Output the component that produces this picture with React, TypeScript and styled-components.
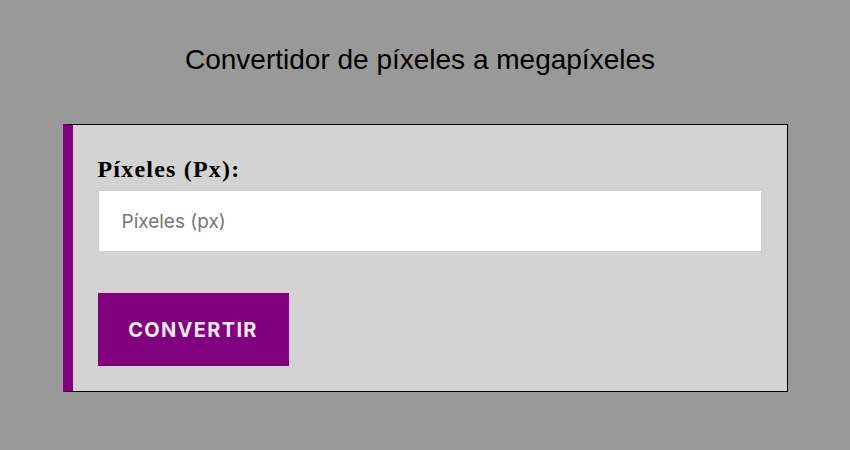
import styled, { createGlobalStyle } from 'styled-components'

const GlobalStyle = createGlobalStyle`
  html, body {
    margin: 0;
    padding: 0;
    background: #999999;
  }
  body {
    font-family: "Liberation Sans", Arial, sans-serif;
  }
`

const Page = styled.div`
  display: flex;
  flex-direction: column;
  align-items: center;
  padding-top: 44px;
`

const Title = styled.h1`
  margin: 0 0 48px 0;
  padding-right: 10px;
  font-family: "Liberation Sans", Arial, sans-serif;
  font-size: 28px;
  font-weight: 400;
  line-height: 32px;
  color: #000;
`

const Card = styled.form`
  box-sizing: border-box;
  width: 725px;
  display: flex;
  flex-direction: column;
  align-items: flex-start;
  padding: 25px;
  background: #d3d3d3;
  border: 1px solid #000;
  border-left: 10px solid #800080;
`

const Label = styled.label`
  font-family: "Liberation Serif", "Times New Roman", serif;
  font-size: 24px;
  font-weight: 700;
  line-height: 30px;
  letter-spacing: 1.2px;
  color: #000;
  margin-top: 4px;
  margin-bottom: 6px;
`

const Input = styled.input`
  box-sizing: border-box;
  width: 100%;
  height: 62px;
  padding: 0 23px;
  border: 1px solid #cfcfcf;
  background: #fff;
  font-family: Inter, "Liberation Sans", sans-serif;
  font-size: 19px;
  color: #333;
  outline: none;

  &::placeholder {
    color: #777;
  }
`

const Button = styled.button`
  box-sizing: border-box;
  margin-top: 41px;
  width: 191px;
  height: 73px;
  border: none;
  background: #800080;
  color: #f3eaf3;
  font-family: Inter, "Liberation Sans", sans-serif;
  font-size: 20px;
  font-weight: 700;
  letter-spacing: 1.3px;
  cursor: pointer;
`

export default function App() {
  return (
    <>
      <GlobalStyle />
      <Page>
        <Title>Convertidor de píxeles a megapíxeles</Title>
        <Card onSubmit={e => e.preventDefault()}>
          <Label htmlFor="px">Píxeles (Px):</Label>
          <Input id="px" type="number" placeholder="Píxeles (px)" />
          <Button type="submit">CONVERTIR</Button>
        </Card>
      </Page>
    </>
  )
}
